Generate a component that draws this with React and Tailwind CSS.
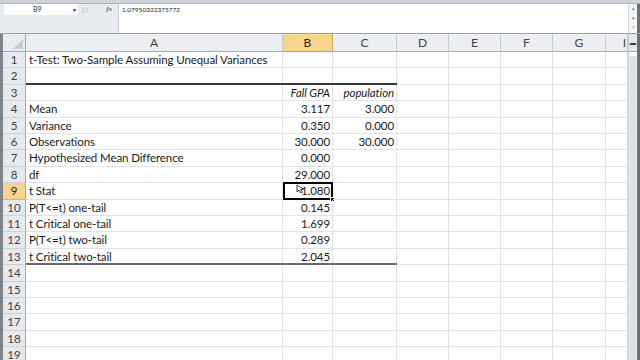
import React from "react";

const cols = [
  { k: "A", w: "w-[257px]" },
  { k: "B", w: "w-[50px]" },
  { k: "C", w: "w-[64px]" },
  { k: "D", w: "w-[52px]" },
  { k: "E", w: "w-[52px]" },
  { k: "F", w: "w-[52px]" },
  { k: "G", w: "w-[53px]" },
  { k: "H", w: "w-[22px]" },
];

const heights = [16, 17, 16, 17, 16, 16, 17, 16, 17, 16, 16, 17, 16, 17, 16, 16, 17, 16, 17];

const data = {
  1: ["t-Test: Two-Sample Assuming Unequal Variances", "", ""],
  3: ["", "Fall GPA", "population"],
  4: ["Mean", "3.117", "3.000"],
  5: ["Variance", "0.350", "0.000"],
  6: ["Observations", "30.000", "30.000"],
  7: ["Hypothesized Mean Difference", "0.000", ""],
  8: ["df", "29.000", ""],
  9: ["t Stat", "1.080", ""],
  10: ["P(T<=t) one-tail", "0.145", ""],
  11: ["t Critical one-tail", "1.699", ""],
  12: ["P(T<=t) two-tail", "0.289", ""],
  13: ["t Critical two-tail", "2.045", ""],
};

function Row({ n, h }) {
  const d = data[n] || ["", "", ""];
  const sel = n === 9;
  return (
    <div className={`flex ${h === 16 ? "h-[16px]" : "h-[17px]"}`}>
      <div
        className={`w-[23px] shrink-0 flex items-center justify-center border-r border-b text-[11.5px] ${
          sel
            ? "bg-[#f6d48a] border-r-[#c9a55a] border-b-[#d9b66a] text-[#222]"
            : "bg-[#e6e9ed] border-r-[#a4abb4] border-b-[#cdd2d8] text-[#444]"
        }`}
      >
        {n}
      </div>
      {cols.map((c, i) => {
        let cls = `${c.w} shrink-0 border-r border-b border-r-[#e0e3e6] border-b-[#e0e3e6] flex items-center text-[11.5px] tracking-[-0.1px] text-[#1a1a1a] whitespace-nowrap overflow-visible relative`;
        if (i === 0) cls += " pl-[3px]";
        else cls += " justify-end pr-[2px]";
        if (n === 3 && i < 3) cls += " italic";
        let extra = null;
        if (n === 2 && i < 3) extra = <div className="absolute left-0 right-[-1px] bottom-[-1px] h-[2px] bg-[#3a3a3a]" />;
        if (n === 13 && i < 3) extra = <div className="absolute left-0 right-[-1px] bottom-[-1px] h-[2px] bg-[#6a6a6a]" />;
        const text = i < 3 ? d[i] : "";
        return (
          <div key={c.k} className={cls}>
            {text}
            {extra}
            {sel && i === 1 && (
              <>
                <div className="absolute left-[0px] top-[-1px] right-[-1px] bottom-[-1px] border-2 border-black" />
                <div className="absolute right-[-3px] bottom-[-3px] w-[5px] h-[5px] bg-black border border-white" />
                <svg className="absolute left-[13px] top-[1px]" width="10" height="10" viewBox="0 0 10 10">
                  <path d="M1 1 L1 8 L3 6 L5 9 L6.5 8.2 L4.6 5.4 L7.5 5.2 Z" fill="white" stroke="#222" strokeWidth="0.9" />
                </svg>
              </>
            )}
          </div>
        );
      })}
    </div>
  );
}

export default function App() {
  return (
    <div
      className="w-[640px] h-[360px] overflow-hidden bg-white flex flex-col"
      style={{ fontFamily: "Lato, 'Open Sans', sans-serif" }}
    >
      {/* top strip */}
      <div className="h-[4px] shrink-0 bg-[#cfd4da] border-b border-[#aeb5bd]" />
      {/* formula bar */}
      <div className="h-[30px] shrink-0 flex bg-[#e7eaee] border-b border-[#9aa3ad]">
        <div className="w-[118px] shrink-0 flex flex-col">
          <div className="h-[11px] flex items-center">
            <div className="w-[74px] ml-[4px] h-[11px] bg-white flex items-center text-[7px] text-[#333]">
              <span className="ml-[29px]">B9</span>
              <span className="ml-auto mr-[2px] text-[6px] text-[#333]">▾</span>
            </div>
            <div className="ml-[4px] w-[6px] h-[6px] rounded-full border border-[#c8cdd3]" />
            <span className="ml-auto mr-[6px] text-[7px] italic font-bold text-[#666]" style={{ fontFamily: "'Liberation Serif', serif" }}>
              fx
            </span>
          </div>
        </div>
        <div className="flex-1 bg-white border-l border-[#c3c9d0] flex">
          <div className="pl-[3px] pt-[1px] text-[6.5px] text-[#222] flex-1">1.07950322375772</div>
          <div className="w-[9px] flex flex-col items-center justify-center gap-[2px] text-[5px] text-[#777] border-l border-[#d5d9de] bg-[#f1f3f5]">
            <span>▴</span>
            <span>▾</span>
            <span>▿</span>
          </div>
          <div className="w-[3px] bg-[#6b6f74]" />
        </div>
      </div>
      {/* grid area */}
      <div className="flex flex-1 min-h-0">
        <div className="w-[3px] shrink-0 bg-[#7f858c]" />
        <div className="flex flex-col w-[625px] shrink-0 overflow-hidden">
          {/* column headers */}
          <div className="flex h-[18px] shrink-0">
            <div className="w-[23px] shrink-0 bg-[#e9ecef] border-r border-b border-[#a4abb4] relative">
              <div
                className="absolute right-[2px] bottom-[2px] w-[10px] h-[10px] bg-[#c7ccd2]"
                style={{ clipPath: "polygon(100% 0, 100% 100%, 0 100%)" }}
              />
            </div>
            {cols.map((c) => (
              <div
                key={c.k}
                className={`${c.w} shrink-0 flex items-center justify-center border-r border-b text-[12px] ${
                  c.k === "B"
                    ? "bg-[#f7d58c] border-r-[#c9a55a] border-b-[#c9a55a] text-[#222]"
                    : "bg-[#eceef1] border-r-[#c6cbd2] border-b-[#a4abb4] text-[#444]"
                }`}
              >
                {c.k === "H" ? <span className="ml-auto mr-[1px] text-[#444]">I</span> : c.k}
              </div>
            ))}
          </div>
          {heights.map((h, i) => (
            <Row key={i} n={i + 1} h={h} />
          ))}
        </div>
        {/* vertical scrollbar */}
        <div className="w-[9px] shrink-0 flex flex-col bg-[#eef0f3] border-l border-[#c5cad0]">
          <div className="h-[18px] flex items-center justify-center bg-[#e3e6ea] border-b border-[#a4abb4] text-[6px] text-[#333]">
            ▬
          </div>
          <div className="h-[4px] bg-white" />
          <div className="flex-1 mx-[1px] bg-[#dde1e6]" />
        </div>
        <div className="w-[3px] shrink-0 bg-[#6b6f74]" />
      </div>
    </div>
  );
}
